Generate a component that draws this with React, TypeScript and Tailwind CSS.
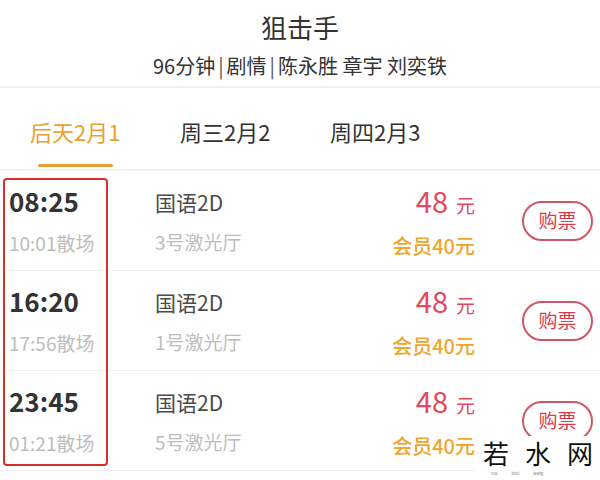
const shows = [
  { start: "08:25", end: "10:01散场", lang: "国语2D", hall: "3号激光厅" },
  { start: "16:20", end: "17:56散场", lang: "国语2D", hall: "1号激光厅" },
  { start: "23:45", end: "01:21散场", lang: "国语2D", hall: "5号激光厅" },
];

const tabs = ["后天2月1", "周三2月2", "周四2月3"];

function ShowRow({ start, end, lang, hall }: (typeof shows)[number]) {
  return (
    <div className="flex h-[100px] items-center border-b border-[#f1f1f1] pl-[9px] pr-[7px]">
      <div className="flex w-[146px] flex-col">
        <span className="text-[26px] font-semibold leading-[32px] text-[#333]">{start}</span>
        <span className="mt-[13px] text-[19px] leading-[26px] text-[#bdbdbd]">{end}</span>
      </div>
      <div className="flex flex-1 flex-col">
        <span className="text-[21px] leading-[30px] text-[#4a4a4a]">{lang}</span>
        <span className="mt-[12px] text-[19px] leading-[26px] text-[#bdbdbd]">{hall}</span>
      </div>
      <div className="flex flex-col items-end">
        <span className="leading-[34px] text-[#e2495c]">
          <span className="text-[29px]">48</span>
          <span className="ml-[8px] text-[19px]">元</span>
        </span>
        <span className="mt-[10px] text-[20px] font-medium leading-[26px] text-[#f0a62c]">会员40元</span>
      </div>
      <button className="ml-[47px] flex h-[40px] w-[71px] items-center justify-center rounded-full border-2 border-[#cf5664] text-[19px] text-[#d83a4c]">
        购票
      </button>
    </div>
  );
}

export default function App() {
  return (
    <div
      className="relative h-[480px] w-[600px] overflow-hidden bg-white"
      style={{ fontFamily: '"Noto Sans CJK SC", "Noto Sans", sans-serif' }}
    >
      <header className="flex flex-col items-center border-b-2 border-[#f2f2f2] pb-[5px] pt-[7px]">
        <h1 className="text-[26px] leading-[39px] text-[#333]">狙击手</h1>
        <p className="mt-[5px] text-[20px] leading-[30px] text-[#333]">
          96分钟<span className="mx-[3px] text-[#555]">|</span>剧情<span className="mx-[3px] text-[#555]">|</span>陈永胜 章宇 刘奕铁
        </p>
      </header>

      <nav className="flex border-b-2 border-[#f2f2f2] pl-[30px] pt-[28px]">
        {tabs.map((tab, i) => (
          <div key={tab} className="w-[150px]">
            <div className="inline-flex flex-col items-center">
              <span className={`text-[22px] leading-[30px] ${i === 0 ? "text-[#e9a132]" : "text-[#333]"}`}>{tab}</span>
              <span className={`mt-[18px] mb-[2px] h-[3px] w-[75px] rounded-full ${i === 0 ? "bg-[#e9a132]" : "bg-transparent"}`} />
            </div>
          </div>
        ))}
      </nav>

      {shows.map((s) => (
        <ShowRow key={s.start} {...s} />
      ))}

      {/* annotation box */}
      <div className="absolute left-[3px] top-[178px] h-[288px] w-[105px] rounded-[4px] border-2 border-[#d8302c]" />

      {/* watermark */}
      <div className="absolute left-[478px] top-[436px] flex h-[44px] w-[122px] flex-col items-start bg-white pl-[5px]">
        <div className="flex gap-[16px] text-[26px] leading-[34px] text-[#111]">
          <span>若</span>
          <span>水</span>
          <span>网</span>
        </div>
        <div className="flex gap-[14px] pl-[8px] text-[4px] leading-[6px] text-[#777]">
          <span>ruo</span>
          <span>shui</span>
          <span>wang</span>
        </div>
      </div>
    </div>
  );
}
